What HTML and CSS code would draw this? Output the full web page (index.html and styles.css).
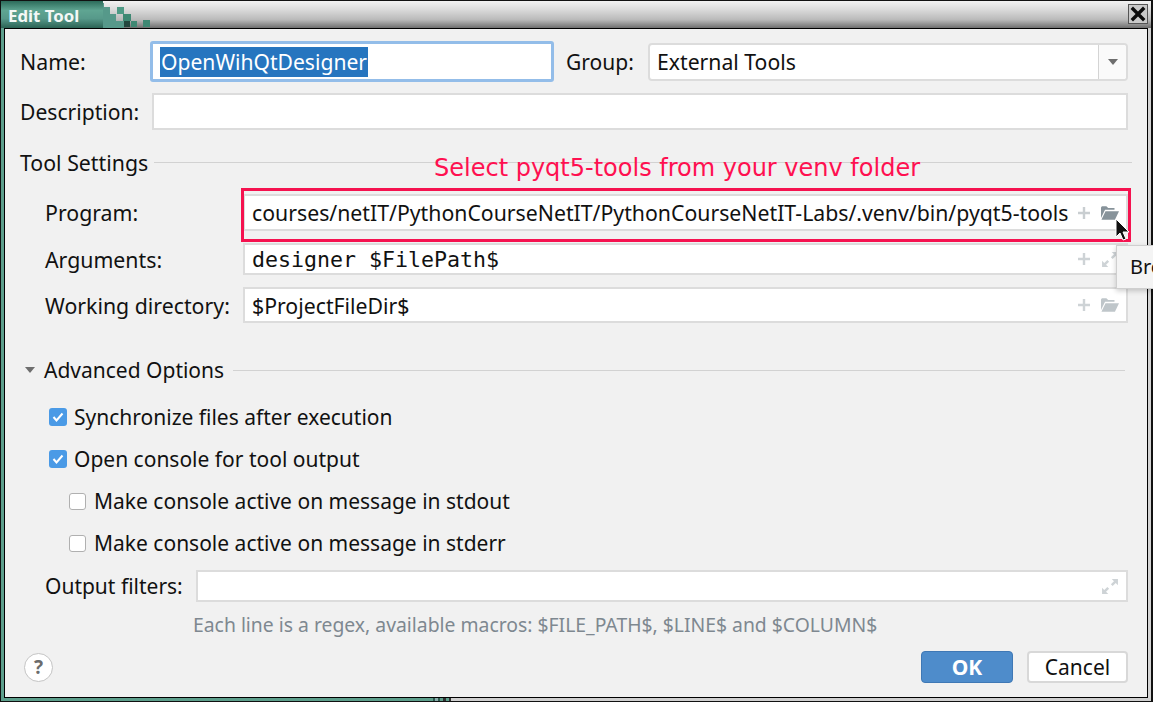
FILE: index.html
```html
<!DOCTYPE html>
<html lang="en">
<head>
<meta charset="utf-8">
<title>Edit Tool</title>
<link rel="stylesheet" href="styles.css">
</head>
<body>
<div class="window">
  <div class="frame">
  <header class="titlebar">
    <div class="title-tab">Edit Tool</div>
    <svg class="stairs" width="48" height="27" viewBox="0 0 48 27">
      <path d="M0 2h1v4h6v7h6v7h8v7H0z" fill="#56998a"/>
      <rect x="14" y="6" width="7" height="7" fill="#4e9a85"/>
      <rect x="20" y="13" width="8" height="7" fill="#3f8873"/>
      <rect x="21" y="20" width="6" height="6" fill="#23473e"/>
      <rect x="28" y="20" width="6" height="6" fill="#3f8873"/>
      <rect x="40" y="19" width="7" height="7" fill="#3f8873"/>
    </svg>
    <button class="close" aria-label="Close">
      <svg width="18" height="18" viewBox="0 0 18 18"><path d="M4 4l10 10M14 4L4 14" stroke="#0b0b0b" stroke-width="3.4" stroke-linecap="square"/></svg>
    </button>
  </header>
  <main class="content">
    <div class="row name-row">
      <label class="lbl lbl-name">Name:</label>
      <div class="name-input"><span class="selected">OpenWihQtDesigner</span></div>
      <label class="lbl lbl-group">Group:</label>
      <div class="combo">
        <span class="combo-text">External Tools</span>
        <span class="combo-btn"><span class="caret"></span></span>
      </div>
    </div>
    <div class="row desc-row">
      <label class="lbl lbl-desc">Description:</label>
      <div class="field grow"></div>
    </div>
    <div class="section tool-title"><span>Tool Settings</span><i class="rule"></i></div>
    <div class="tool-grid">
      <label class="lbl">Program:</label>
      <div class="field prog">
        <span class="path">courses/netIT/PythonCourseNetIT/PythonCourseNetIT-Labs/.venv/bin/pyqt5-tools</span>
        <svg class="ico" width="12" height="12" viewBox="0 0 12 12"><path d="M6 0v12M0 6h12" stroke="#c9ced1" stroke-width="2.400"/></svg>
        <svg class="ico" width="18" height="14" viewBox="0 0 20 15"><path d="M0 13V1.500L1 0h5l2 2h7v2H4.500z" fill="#87939a"/><path d="M5 5.500h15L15.500 15H0.500z" fill="#87939a"/></svg>
      </div>
      <label class="lbl">Arguments:</label>
      <div class="field args">
        <span class="mono">designer $FilePath$</span>
        <svg class="ico" width="12" height="12" viewBox="0 0 12 12"><path d="M6 0v12M0 6h12" stroke="#ced3d6" stroke-width="2.400"/></svg>
        <svg class="ico" width="18" height="15" viewBox="0 0 18 17"><path d="M11 0h7v7l-2.500-2.500-3.500 3.500-2-2 3.500-3.500zM0 10l2.500 2.500 3.500-3.500 2 2-3.500 3.500L7 17H0z" fill="#ced3d6"/></svg>
      </div>
      <label class="lbl">Working directory:</label>
      <div class="field work">
        <span class="path">$ProjectFileDir$</span>
        <svg class="ico" width="12" height="12" viewBox="0 0 12 12"><path d="M6 0v12M0 6h12" stroke="#ced3d6" stroke-width="2.400"/></svg>
        <svg class="ico" width="18" height="14" viewBox="0 0 20 15"><path d="M0 13V1.500L1 0h5l2 2h7v2H4.500z" fill="#bfc6ca"/><path d="M5 5.500h15L15.500 15H0.500z" fill="#bfc6ca"/></svg>
      </div>
    </div>
    <div class="section adv-title"><span class="caret"></span><span>Advanced Options</span><i class="rule"></i></div>
    <div class="checks">
      <div class="check"><span class="box on"><svg width="18" height="18" viewBox="0 0 18 18"><path d="M4.500 9l3 3.500 6-7" fill="none" stroke="#fff" stroke-width="2"/></svg></span>Synchronize files after execution</div>
      <div class="check"><span class="box on"><svg width="18" height="18" viewBox="0 0 18 18"><path d="M4.500 9l3 3.500 6-7" fill="none" stroke="#fff" stroke-width="2"/></svg></span>Open console for tool output</div>
      <div class="check sub"><span class="box"></span>Make console active on message in stdout</div>
      <div class="check sub"><span class="box"></span>Make console active on message in stderr</div>
    </div>
    <div class="row filter-row">
      <label class="lbl">Output filters:</label>
      <div class="field grow filter">
        <svg class="ico" width="16" height="15" viewBox="0 0 18 17"><path d="M11 0h7v7l-2.500-2.500-3.500 3.500-2-2 3.500-3.500zM0 10l2.500 2.500 3.500-3.500 2 2-3.500 3.500L7 17H0z" fill="#ced3d6"/></svg>
      </div>
    </div>
    <p class="hint">Each line is a regex, available macros: $FILE_PATH$, $LINE$ and $COLUMN$</p>
    <footer class="footer">
      <button class="help">?</button>
      <button class="btn ok">OK</button>
      <button class="btn cancel">Cancel</button>
    </footer>
  </main>
  </div>
  <div class="note">Select pyqt5-tools from your venv folder</div>
  <div class="redbox"></div>
  <div class="tooltip">Browse</div>
  <svg class="cursor" width="16" height="26" viewBox="0 0 16 26"><path d="M1 1v18l4-4 3 7 3-1-3-7h6z" fill="#111" stroke="#fff" stroke-width="1"/></svg>
</div>
</body>
</html>
```
FILE: styles.css
```css
* { box-sizing: border-box; }
html, body { margin: 0; padding: 0; }
body { width: 1153px; height: 702px; overflow: hidden; background: #111; font-family: "Noto Sans", sans-serif; font-size: 21px; color: #111; }
.window { position: relative; width: 1153px; height: 702px; overflow: hidden; background: #111; padding: 1px 2px 1px 1px; }
.frame { height: 100%; display: flex; flex-direction: column; background:
  linear-gradient(to right, #5d9f8c 432px, #2c5a4e 432px 434px, #8aa 434px 437px, #2c5a4e 437px 439px, #5d9f8c 439px 442px, #333 442px 445px, #5d9f8c 445px 448px, #333 448px 450px, #cfcfcf 450px) left bottom / 100% 3px no-repeat,
  linear-gradient(to right, #5d9f8c 3px, transparent 3px) left top / 100% 100% no-repeat,
  #d4d4d4; }
.titlebar { height: 27px; flex: none; display: flex; align-items: stretch; background: linear-gradient(#f2f2f2 0, #dcdcdc 30%, #b9b9b9 70%, #6f6f6f 100%); }
.title-tab { width: 102px; padding: 0 0 0 7px; color: #f4f8f6; font-weight: 700; font-size: 16.800px; line-height: 29px; background: linear-gradient(#2c6b5a 0, #5fa592 35%, #57998a 65%, #2b6354 100%); white-space: nowrap; }
.stairs { flex: none; }
.close { margin-left: auto; margin-right: 3px; margin-top: 3px; width: 20px; height: 20px; padding: 0; display: flex; align-items: center; justify-content: center; border: 1px solid #555; background: #c9c9c9; }
.content { flex: 1; margin: 0 3px 3px 3px; background: #f1f1f1; border: 1px solid #000; padding: 12px 19px 0 15px; display: flex; flex-direction: column; }
.row { display: flex; align-items: center; }
.lbl { white-space: nowrap; font-size: 21.300px; }
.name-row { height: 41px; flex: none; }
.lbl-name { width: 130px; }
.name-input { width: 404px; height: 41px; border: 3px solid #93bde9; border-radius: 3px; background: #fff; padding: 0 7px; display: flex; align-items: center; }
.selected { background: #2675bf; color: #fff; line-height: 30px; padding: 0 1px; font-size: 21.100px; }
.lbl-group { margin-left: 12px; width: 82px; font-size: 21px; }
.combo { flex: 1; height: 38px; background: #fff; border: 2px solid #dcdcdc; border-radius: 4px; display: flex; align-items: center; }
.combo-text { flex: 1; padding-left: 7px; font-size: 21.200px; }
.combo-btn { width: 28px; height: 100%; border-left: 1px solid #d4d4d4; background: #fafafa; display: flex; align-items: center; justify-content: center; border-radius: 0 3px 3px 0; }
.caret { width: 0; height: 0; border-left: 5px solid transparent; border-right: 5px solid transparent; border-top: 6px solid #6e6e6e; display: block; }
.desc-row { margin-top: 11px; height: 37px; flex: none; }
.lbl-desc { width: 132px; font-size: 21.100px; }
.field { background: #fff; border: 2px solid #dcdcdc; height: 37px; display: flex; align-items: center; }
.grow { flex: 1; }
.section { display: flex; align-items: center; gap: 6px; flex: none; font-size: 21.300px; }
.rule { flex: 1; height: 1px; background: #d2d2d2; display: block; }
.tool-title { margin-top: 18px; height: 28px; margin-right: -4px; }
.tool-grid { margin-top: 18px; padding-left: 25px; display: grid; grid-template-columns: 198px 1fr; row-gap: 12px; align-items: center; flex: none; }
.tool-grid .field { padding-left: 7px; padding-right: 7px; gap: 11px; }
.tool-grid .prog { height: 37px; }
.tool-grid .args { height: 32px; }
.tool-grid .work { height: 36px; }
.path { flex: 1; min-width: 0; white-space: nowrap; overflow: hidden; font-size: 21.250px; }
.prog .path { margin-right: -3px; }
.mono { flex: 1; font-family: "DejaVu Sans Mono", monospace; font-size: 21.600px; white-space: nowrap; }
.ico { flex: none; }
.adv-title { margin-top: 33px; height: 28px; padding-left: 5px; gap: 9px; margin-right: 3px; font-size: 21px; }
.checks { margin-top: 19px; padding-left: 29px; display: flex; flex-direction: column; gap: 14px; flex: none; }
.check { height: 28px; display: flex; align-items: center; gap: 7px; white-space: nowrap; }
.check.sub { padding-left: 20px; gap: 8px; }
.box { width: 17px; height: 17px; border: 1px solid #b0b0b0; border-radius: 3px; background: #fff; flex: none; display: block; }
.box.on { width: 18px; height: 18px; border: 0; background: #4a9ae6; }
.box svg { display: block; }
.filter-row { margin-top: 13px; padding-left: 25px; height: 32px; flex: none; }
.filter-row .lbl { width: 151px; font-size: 21px; }
.filter { height: 32px; justify-content: flex-end; padding-right: 8px; }
.hint { margin: 9px 0 0 173px; color: #7e8890; font-size: 19.350px; line-height: 28px; white-space: nowrap; flex: none; }
.footer { margin-top: 12px; height: 32px; display: flex; align-items: center; gap: 14px; padding-left: 4px; flex: none; }
.help { width: 29px; height: 29px; border-radius: 50%; border: 1px solid #c4c4c4; background: #fff; color: #6c6c6c; font: 700 19px "Noto Sans", sans-serif; margin-right: auto; padding: 0; }
.btn { height: 32px; font: 21px "Noto Sans", sans-serif; padding: 0; border-radius: 4px; }
.ok { width: 92px; background: #4e8ccb; border: 1px solid #3f78b5; color: #fff; font-weight: 700; }
.cancel { width: 101px; background: #fff; border: 2px solid #d8d8d8; color: #111; }
.note { position: absolute; left: 434px; top: 153px; color: #ff1050; font-family: "DejaVu Sans", sans-serif; font-size: 24px; line-height: 30px; white-space: nowrap; }
.redbox { position: absolute; left: 241px; top: 188px; width: 890px; height: 54px; border: 3px solid #f5124f; }
.tooltip { position: absolute; left: 1116px; top: 245px; width: 40px; height: 44px; background: #f4f4f4; border: 1px solid #cfcfcf; box-shadow: 0 2px 5px rgba(0,0,0,.2); padding-left: 13px; line-height: 42px; font-size: 20px; overflow: hidden; white-space: nowrap; }
.cursor { position: absolute; left: 1115px; top: 218px; }
```
